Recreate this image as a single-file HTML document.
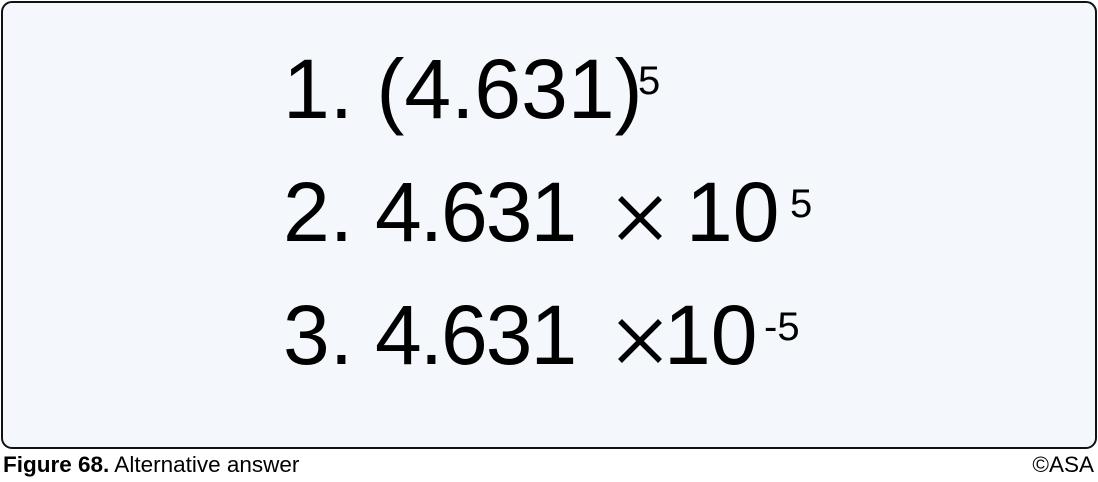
<!DOCTYPE html>
<html><head><style>
body{margin:0;width:1098px;height:482px;background:#fff;position:relative;font-family:"Liberation Sans",Arial,sans-serif;overflow:hidden}
.box{position:absolute;left:1px;top:1px;width:1092px;height:444px;border:2px solid #111;border-radius:11px;background:#f4f8fc}
.l{position:absolute;font-size:84px;line-height:1;color:#000;white-space:nowrap}
.s{position:absolute;font-size:40px;line-height:1}
.cap{position:absolute;top:454px;font-size:22.5px;line-height:1}
svg{position:absolute}
</style></head><body>
<div class="box"></div>
<div class="l" style="left:283px;top:47px">1. (4.631)</div><div class="s" style="left:638px;top:61px">5</div>
<div class="l" style="left:283px;top:170px">2.</div>
<div class="l" style="left:375px;top:170px;letter-spacing:-2px">4.631</div>
<svg style="left:617px;top:195px" width="46" height="46"><path d="M3 3L43 43M43 3L3 43" stroke="#000" stroke-width="5.5"/></svg>
<div class="l" style="left:686px;top:170px">10</div><div class="s" style="left:790px;top:184px">5</div>
<div class="l" style="left:283px;top:293px">3.</div>
<div class="l" style="left:375px;top:293px;letter-spacing:-2px">4.631</div>
<svg style="left:617px;top:318px" width="46" height="46"><path d="M3 3L43 43M43 3L3 43" stroke="#000" stroke-width="5.5"/></svg>
<div class="l" style="left:664px;top:293px">10</div><div class="s" style="left:764px;top:307px">-5</div>
<div class="cap" style="left:3px"><b>Figure 68.</b> Alternative answer</div>
<div class="cap" style="right:4px">©ASA</div>
</body></html>
